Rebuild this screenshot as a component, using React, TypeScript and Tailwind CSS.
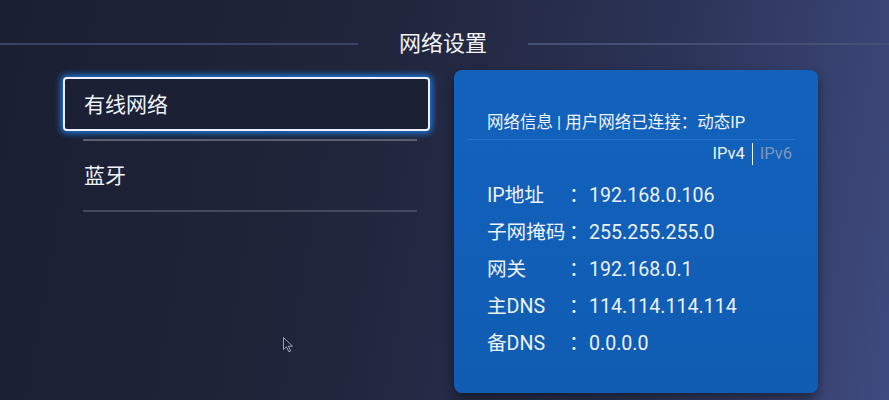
import React from "react";

const rows = [
  { label: "IP地址", value: "192.168.0.106" },
  { label: "子网掩码", value: "255.255.255.0" },
  { label: "网关", value: "192.168.0.1" },
  { label: "主DNS", value: "114.114.114.114" },
  { label: "备DNS", value: "0.0.0.0" },
];

const menu = [
  { name: "有线网络", active: true, line: "bg-[#5b5f72]" },
  { name: "蓝牙", active: false, line: "bg-[#43485d]" },
];

export default function App() {
  return (
    <div className="relative w-[889px] h-[400px] overflow-hidden bg-[linear-gradient(100deg,#1b1f32_0%,#20253b_40%,#2c3458_72%,#3f4b7f_100%)] font-['Roboto','Noto_Sans_CJK_SC',sans-serif] text-[#eef2fa]">
      {/* header */}
      <div className="flex items-center pt-[31px]">
        <div className="w-[358px] h-[2px] bg-[#3c4465]" />
        <div className="flex-1 text-center text-[22px] leading-[26px] text-[#f2f4fa]">网络设置</div>
        <div className="w-[361px] h-[2px] bg-[#454e74]" />
      </div>

      <div className="flex pt-[20px]">
        {/* left menu */}
        <div className="ml-[63px] w-[367px]">
          {menu.map((m) => (
            <div key={m.name}>
              <div
                className={
                  m.active
                    ? "h-[54px] flex items-center pl-[19px] pt-[3px] rounded-[4px] border-2 border-[#eaf2ff] bg-[#1c2035] shadow-[0_0_6px_2px_#1f7de6] text-[21px]"
                    : "h-[54px] flex items-center pl-[21px] pt-[3px] text-[21px]"
                }
              >
                {m.name}
              </div>
              <div className={"mt-[8px] mb-[7px] ml-[20px] mr-[13px] h-[2px] " + m.line} />
            </div>
          ))}
        </div>

        {/* info card */}
        <div className="ml-[24px] w-[364px] h-[323px] -mt-[7px] rounded-[8px] bg-[linear-gradient(180deg,#1262bc_0%,#105cb3_100%)] shadow-[0_6px_12px_rgba(0,0,0,0.45)] pt-[42px]">
          <div className="pl-[33px] text-[16.5px] leading-[22px]">网络信息 | 用户网络已连接：动态IP</div>
          <div className="mt-[5px] ml-[14px] mr-[23px] h-px bg-[#2a72c6]" />
          <div className="mt-[3px] pr-[26px] flex justify-end items-center text-[16.5px] leading-[22px]">
            <span>IPv4</span>
            <span className="mx-[7px] w-px h-[22px] bg-[#eef2fa]" />
            <span className="text-[#7f97bd]">IPv6</span>
          </div>
          <div className="mt-[12px] pl-[33px]">
            {rows.map((r) => (
              <div key={r.label} className="h-[37px] flex items-center text-[19.6px]">
                <span className="w-[82px]">{r.label}</span>
                <span className="w-[14px]">：</span>
                <span className="ml-[6px]">{r.value}</span>
              </div>
            ))}
          </div>
        </div>
      </div>

      {/* mouse pointer */}
      <svg className="absolute left-[283px] top-[337px]" width="11" height="16" viewBox="0 0 11 16">
        <path d="M0.5 0.5 L0.5 12.5 L3.5 9.8 L5.8 14.8 L7.6 14 L5.4 9.2 L9.5 9.2 Z" fill="#1e2236" stroke="#9aa0b2" strokeWidth="1" />
      </svg>
    </div>
  );
}
